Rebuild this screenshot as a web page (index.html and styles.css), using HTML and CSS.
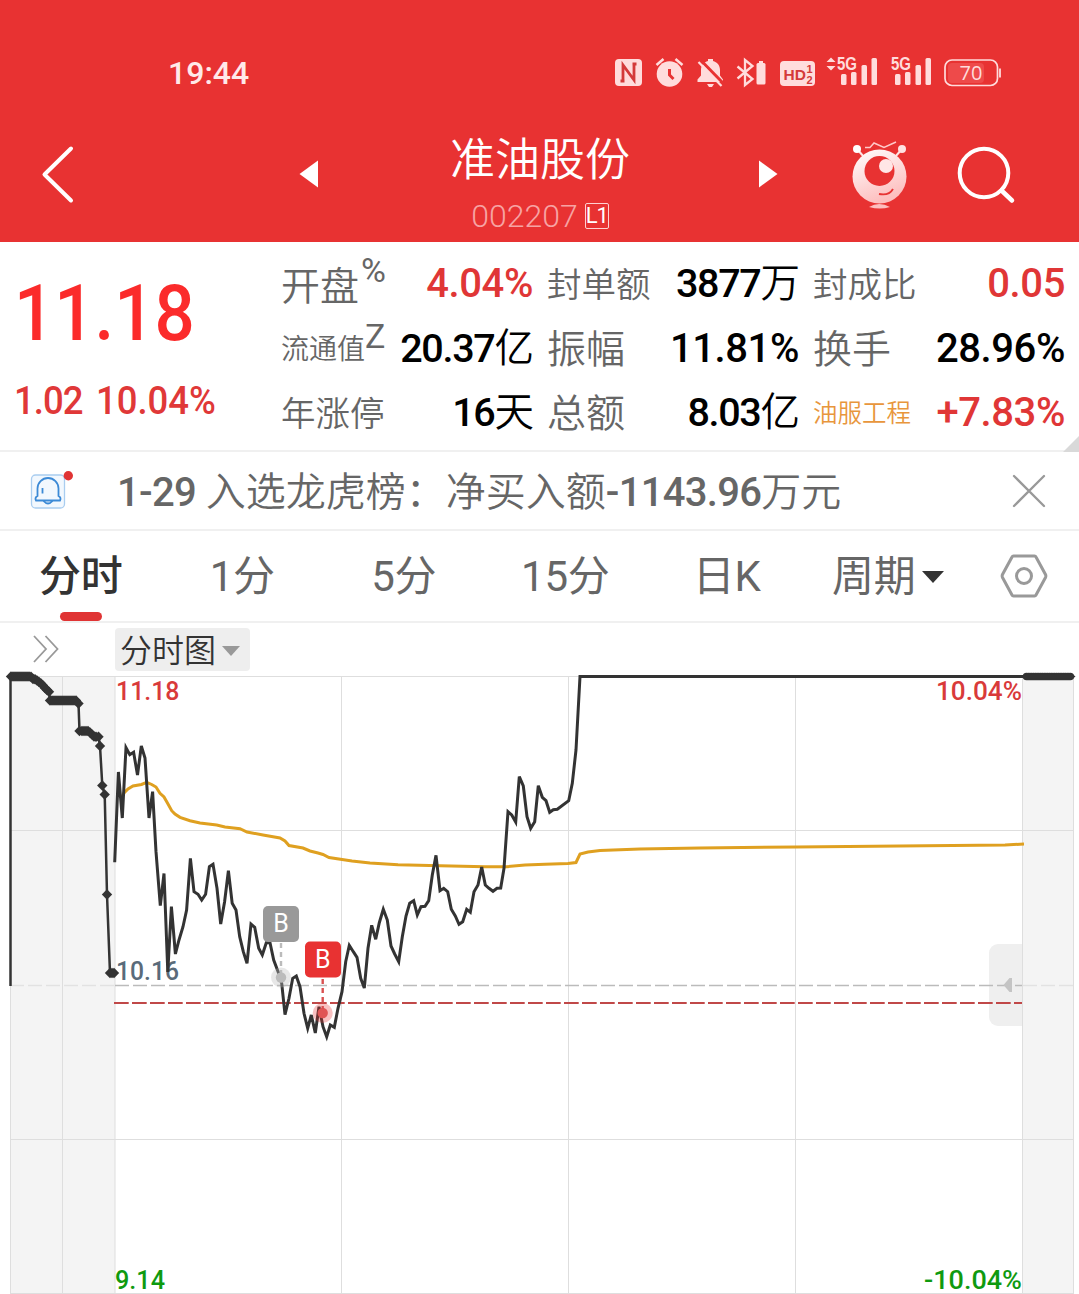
FILE: index.html
```html
<!DOCTYPE html>
<html lang="zh-CN">
<head>
  <meta charset="UTF-8" />
  <meta name="viewport" content="width=device-width, initial-scale=1" />
  <title>准油股份 002207</title>
  <link rel="stylesheet" href="styles.css">
</head>
<body>
  <header>
    <div class="status-bar">
      <span class="clock">19:44</span>
      <svg class="status-icons" width="390" height="40" viewBox="612 52 390 40">
        <!-- nfc -->
        <rect x="615" y="59" width="27" height="27" rx="4" fill="#ffdcdc"/>
        <path d="M623 81.500V65L634 80V63.500M620.500 81h4M632.500 64h4" fill="none" stroke="#d43a3a" stroke-width="2.800"/>
        <!-- alarm -->
        <circle cx="669.500" cy="74" r="12.800" fill="#ffdcdc"/>
        <path d="M656.500 65l7-6M682.500 65l-7-6" stroke="#ffdcdc" stroke-width="2.500"/>
        <path d="M669.500 69v6l4 4" fill="none" stroke="#e83232" stroke-width="3"/>
        <!-- muted bell -->
        <path d="M697.500 82v-2.500l3.500-4V70c0-5 3-8 7-9v-2h5v2c4 1 7 4 7 9v5.500l3 4V82zM707 84h7l-2 3h-3z" fill="#ffdcdc"/>
        <path d="M701 60.500l22.500 23" stroke="#e83232" stroke-width="3"/>
        <path d="M698.500 62l23 24" stroke="#ffdcdc" stroke-width="2.200"/>
        <!-- bluetooth -->
        <path d="M737.500 66.500l15 12.500-7.500 6V60l7.500 6-15 12.500" fill="none" stroke="#ffdcdc" stroke-width="2.300"/>
        <rect x="756.500" y="63" width="9" height="21.500" rx="1.500" fill="#ffdcdc"/>
        <rect x="759" y="61" width="4" height="3" fill="#ffdcdc"/>
        <!-- hd -->
        <rect x="780" y="61" width="35" height="25" rx="4" fill="#ffdcdc"/>
        <text x="783.500" y="80" class="hd-text">HD</text>
        <text x="806.500" y="72.500" class="hd-sub">1</text>
        <text x="806.500" y="83.500" class="hd-sub">2</text>
        <!-- signals -->
        <path d="M831 57.500l4.500 4.500h-9zM831 70.500l4.500-4.500h-9z" fill="#ffdcdc"/>
        <text x="837" y="70" textLength="20" lengthAdjust="spacingAndGlyphs" class="net-text">5G</text>
        <text x="891" y="70" textLength="20" lengthAdjust="spacingAndGlyphs" class="net-text">5G</text>
        <g fill="#ffdcdc">
          <rect x="841" y="74" width="5.500" height="11" rx="1.500"/>
          <rect x="851" y="72" width="5.500" height="13" rx="1.500"/>
          <rect x="861.500" y="65" width="5.500" height="20" rx="1.500"/>
          <rect x="871.500" y="58" width="5.500" height="27" rx="1.500"/>
          <rect x="895" y="74" width="5.500" height="11" rx="1.500"/>
          <rect x="905" y="72" width="5.500" height="13" rx="1.500"/>
          <rect x="915.500" y="65" width="5.500" height="20" rx="1.500"/>
          <rect x="925.500" y="58" width="5.500" height="27" rx="1.500"/>
        </g>
        <!-- battery -->
        <rect x="948" y="63" width="36" height="20" rx="4" fill="#ee4a4a"/>
        <rect x="945" y="60" width="52.500" height="25.500" rx="7" fill="none" stroke="#ffdcdc" stroke-width="1.700"/>
        <path d="M1000 68.500v9" stroke="#ffdcdc" stroke-width="1.800"/>
        <text x="971" y="79.500" text-anchor="middle" class="battery-text">70</text>
      </svg>
    </div>
    <div class="title-bar">
      <svg class="back" width="34" height="60" viewBox="0 0 34 60"><path d="M31 4.500L4.500 30.500 31 56.500" fill="none" stroke="#fff" stroke-width="4" stroke-linecap="round" stroke-linejoin="round"/></svg>
      <svg class="prev" width="20" height="28" viewBox="0 0 20 28"><path d="M0.500 14L19 0.500v27z" fill="#fff"/></svg>
      <div class="stock">
        <h1>准油股份</h1>
        <div class="code">002207<span class="level">L1</span></div>
      </div>
      <svg class="next" width="20" height="28" viewBox="0 0 20 28"><path d="M19.500 14L1 0.500v27z" fill="#fff"/></svg>
      <svg class="robot" width="56" height="70" viewBox="852 139 56 70">
        <defs>
          <linearGradient id="robotFill" x1="0" y1="0" x2="0.400" y2="1">
            <stop offset="0" stop-color="#fff"/>
            <stop offset="1" stop-color="#fdbfbf"/>
          </linearGradient>
        </defs>
        <path d="M857 149l7 8M902 149l-7 8" stroke="#ffe3e3" stroke-width="2"/>
        <circle cx="857" cy="149" r="4" fill="#fff"/>
        <circle cx="902" cy="149" r="4" fill="#ffe3e3"/>
        <path d="M865 147.500h5l4-4.500 10 4.500 12-5.500" fill="none" stroke="#ffc9c9" stroke-width="1.500"/>
        <circle cx="879.500" cy="176.500" r="27" fill="url(#robotFill)"/>
        <circle cx="879.500" cy="171" r="15" fill="#e83232"/>
        <circle cx="886" cy="166" r="7" fill="#ffe6e6"/>
        <path d="M879 194q10 2 14-5" fill="none" stroke="#e83232" stroke-width="1.800"/>
        <path d="M869 207q10-6 21 0-10 3-21 0z" fill="#fdbfbf"/>
      </svg>
      <svg class="search" width="60" height="60" viewBox="957 144 60 60"><circle cx="984" cy="173" r="24.300" fill="none" stroke="#fff" stroke-width="4"/><path d="M1001.500 190.500l10.500 10" stroke="#fff" stroke-width="4.500" stroke-linecap="round"/></svg>
    </div>
  </header>

  <section class="quote">
    <div class="price-box">
      <div class="price">11.18</div>
      <div class="change"><span>1.02</span><span>10.04%</span></div>
    </div>
    <div class="stats">
      <div class="stat"><span class="label sup-label">开盘<sup>%</sup></span><span class="value red">4.04%</span></div>
      <div class="stat"><span class="label mid">封单额</span><span class="value unit">3877<i>万</i></span></div>
      <div class="stat"><span class="label mid">封成比</span><span class="value red">0.05</span></div>
      <div class="stat"><span class="label small">流通值<sup>Z</sup></span><span class="value unit">20.37<i>亿</i></span></div>
      <div class="stat"><span class="label">振幅</span><span class="value">11.81%</span></div>
      <div class="stat"><span class="label">换手</span><span class="value">28.96%</span></div>
      <div class="stat"><span class="label mid">年涨停</span><span class="value unit">16<i>天</i></span></div>
      <div class="stat"><span class="label">总额</span><span class="value unit">8.03<i>亿</i></span></div>
      <div class="stat"><span class="label sector">油服工程</span><span class="value red">+7.83%</span></div>
    </div>
    <span class="corner"></span>
  </section>

  <section class="notice">
    <svg class="bell" width="46" height="40" viewBox="30 471 46 40">
      <rect x="31.500" y="475" width="33" height="33" rx="4" fill="#f2f8fe" stroke="#a9cdf0" stroke-width="1.300"/>
      <path d="M36 500.500q-1.500-3 1.500-4.500V488.500a10.500 10.500 0 0 1 21 0V496q3 1.500 1.500 4.500zM43.500 501q4.500 5 9 0M42.500 488v5.500" fill="none" stroke="#3c8ad6" stroke-width="1.800"/>
      <circle cx="68.300" cy="475.700" r="4.700" fill="#e03434"/>
    </svg>
    <p><b>1-29</b> 入选龙虎榜：净买入额<b>-1143.96</b>万元</p>
    <svg class="close" width="34" height="34" viewBox="0 0 34 34"><path d="M2 2l30 30M32 2L2 32" stroke="#999" stroke-width="2.300" stroke-linecap="round"/></svg>
  </section>

  <nav class="tabs">
    <span class="tab active">分时</span>
    <span class="tab">1分</span>
    <span class="tab">5分</span>
    <span class="tab">15分</span>
    <span class="tab">日K</span>
    <span class="tab">周期<b class="arrow"></b></span>
    <svg class="settings" width="48" height="44" viewBox="0 0 48 44"><path d="M13.500 2h21q1 0 1.500 1l9.500 17.500q.7 1.500 0 3L36 41q-.5 1-1.500 1h-21q-1 0-1.500-1L2.500 23.500q-.7-1.500 0-3L12 3q.5-1 1.500-1z" fill="none" stroke="#999" stroke-width="3"/><circle cx="24" cy="22" r="7.500" fill="none" stroke="#999" stroke-width="3"/></svg>
  </nav>

  <div class="toolbar">
    <svg class="expand" width="28" height="28" viewBox="0 0 28 28"><path d="M2 1l12 13L2 27M13.500 1l12 13-12 13" fill="none" stroke="#999" stroke-width="1.800"/></svg>
    <span class="chart-type">分时图<b class="arrow"></b></span>
  </div>

  <svg class="chart" width="1079" height="623" viewBox="0 671 1079 623">
    <defs>
      <marker id="dot" markerUnits="userSpaceOnUse" markerWidth="12" markerHeight="12" refX="6" refY="6">
        <path d="M0.800 6L6 0.800 11.200 6 6 11.200z" fill="#333"/>
      </marker>
    </defs>
    <!-- call auction bands -->
    <rect x="10" y="676" width="105" height="618" fill="#f4f4f4"/>
    <rect x="1022" y="676" width="52" height="618" fill="#f4f4f4"/>
    <path class="grid" d="M10 676.500H1074M10 830.500H1074M10 1139.500H1074M10 1293.500H1074M10.500 676V1294M62.500 676V1294M115 676V1294M341.500 676V1294M568.500 676V1294M795.500 676V1294M1022.500 676V1294M1073.500 676V1294"/>
    <rect x="989" y="944" width="33" height="82" fill="#efefef" rx="9"/>
    <rect x="1008" y="944" width="14" height="82" fill="#efefef"/>
    <path d="M10 985.500H115M1023 985.500H1074" stroke="#e2e2e2" stroke-width="1.500" stroke-dasharray="14 4"/>
    <path d="M115 985.500H1022" stroke="#bbb" stroke-width="1.500" stroke-dasharray="14 4"/>
    <path d="M1003.500 985l6-7h2.500v14h-2.500z" fill="#c4c4c4"/>
    <text x="116" y="979.500" textLength="63" lengthAdjust="spacingAndGlyphs" class="axis base">10.16</text>
    <path d="M114 1003H1022" stroke="#c04848" stroke-width="2" stroke-dasharray="14.700 3.300"/>

    <polyline class="average" points="122,797 124,793 128,789 133,786 141.500,784.500 146.700,782.300 151.700,784.500 156,787 160,793.300 164,797 168,804 171.700,810.700 175,814 180,817.300 190,820.700 200,823 216.700,825 225,827 240,828.700 247,832 263,835 280,838 285,841 289,845.500 303,848 310,851 318,853 323,854.500 329,857.500 352,861 370,863 398,864.700 440,865.700 485,866.700 507,866.700 525,865 545,864.300 568,863.500 576,862.500 580,854 588,852 600,850.500 640,849 700,848 796,847 900,846 1005,845 1024,844"/>
    <polyline class="price-line" points="114.700,862.300 118.400,772 122.300,818 126,747.700 129.800,754.700 133.600,752.300 137.500,775 141.300,746 145,758 149,818 152.600,791.700 156,851.700 160.300,905.700 164,873.500 167.800,972 171.400,906.700 175.400,954 179,940 183,926.700 186.600,910 190.400,858.300 194,891.700 198,894.300 201.700,900 205.600,894.300 209.400,866.700 213,864.300 217,888.300 220.700,924 224.600,901.700 228.400,870.700 232.200,903.300 236,910 239.700,936.700 243.300,951.700 247,963.300 251,924 254.700,927.300 258.700,948.300 262.300,955 266.300,942.700 270,942.700 273.700,960 279.300,975 281.700,983.300 285,1014.700 289,998.300 292.700,978.300 296.300,976 300,986.700 304,1013.300 307.700,1028.300 311.300,1015 315.300,1033 319,1006.700 323,1026.700 326.700,1036.700 330.300,1025 334.300,1027.300 338,1008.300 342,991.700 345.700,961.700 349.300,945.300 353.300,951.700 357,957.300 360.700,978.300 364.300,988 368,948.300 371.700,925.300 375.700,939.300 379.300,922.700 383.300,909.300 387.300,920 391,946 394.700,954 398.700,961.700 402.300,936.700 406,916 409.700,903.300 413.700,900.700 417.300,915 421,906.700 425,906.300 428.700,900.700 432.300,875 436,855.300 440,890.700 443.700,888.300 447.700,891.700 451.300,909.300 455.300,916 459,924.300 462.700,921.700 466.700,909.300 470.300,912.300 474,891.700 478,885 481.700,867 485.300,885 489,888.300 493,891.300 497,888.300 500.700,888 504,868.300 508,811.700 511.700,815 515.700,822 519.300,776.700 523.300,786 527,816.700 530.700,828.300 534.700,821.700 538.300,785.700 542.300,797.300 546,800.700 549.700,812.300 553.300,809.700 557.300,809.300 568.700,800.700 572.300,783.300 576,750 580,676.500 1024,676.500"/>

    <!-- call auction -->
    <path d="M10.500 676V986" stroke="#333" stroke-width="2.500"/>
    <polyline class="auction" points="11,676.500 13,676.500 15,676.500 17,676.500 19,676.500 21,676.500 23,676.500 25,676.500 27,676.500 29,676.500 31,676.700 33,679 35,679.300 37,680.500 39,682 41,683.500 43,685.500 45,688 47,690 49,691.700 50,700.500 52,700.500 54,700.500 56,700.500 58,700.500 60,700.500 62,700.500 64,700.500 66,700.500 68,700.500 70,700.500 72,700.500 74,700.500 76,700.500 78.500,703.500 79.500,731 82,731 84,731 86,731 88,731 90,732.500 92,734.500 94,736.500 96,736.800 98.500,736.800 100,746 102.300,785.500 104.700,794.500 107,894.500 110,973 112,973 114,973"/>
    <path d="M1026.500 676.500H1071.500" stroke="#333" stroke-width="7.500" stroke-linecap="round" stroke-dasharray="0.100 2.200"/>
    <path d="M1024 674.500H1073L1075.500 676.500 1073 678.500H1024z" fill="#333"/>

    <!-- buy marks -->
    <g>
      <circle cx="281" cy="977.500" r="10" fill="#bbb" opacity=".35"/>
      <circle cx="281" cy="977.500" r="5.200" fill="#bbb"/>
      <path d="M281 943v30" stroke="#bbb" stroke-width="2.400" stroke-dasharray="5 4"/>
      <rect x="263" y="906" width="36" height="36" rx="5" fill="#999"/>
      <text x="281" y="932" text-anchor="middle" class="mark">B</text>
      <circle cx="322.700" cy="1013" r="10" fill="#e83232" opacity=".3"/>
      <circle cx="322.700" cy="1013" r="5.200" fill="#e05555"/>
      <path d="M322.700 979v30" stroke="#d95050" stroke-width="2.400" stroke-dasharray="5 4"/>
      <rect x="305" y="941.500" width="36" height="36" rx="5" fill="#e83232"/>
      <text x="322.700" y="967.500" text-anchor="middle" class="mark">B</text>
    </g>

    <text x="116" y="700" textLength="63.500" lengthAdjust="spacingAndGlyphs" class="axis up">11.18</text>
    <text x="936" y="700" textLength="86" lengthAdjust="spacingAndGlyphs" class="axis up">10.04%</text>
    <text x="115" y="1289" textLength="50" lengthAdjust="spacingAndGlyphs" class="axis down">9.14</text>
    <text x="924" y="1289" textLength="98" lengthAdjust="spacingAndGlyphs" class="axis down">-10.04%</text>
  </svg>
</body>
</html>
```

FILE: styles.css
```css
* {
  box-sizing: border-box;
}
body {
  margin: 0;
  width: 1079px;
  height: 1294px;
  overflow: hidden;
  background: #fff;
  color: #000;
  font-family: Roboto, "Noto Sans CJK SC", sans-serif;
}
svg {
  display: block;
  flex-shrink: 0;
}
header {
  height: 242px;
  background: #e83232;
  color: #fff;
}
.status-bar {
  display: flex;
  justify-content: space-between;
  align-items: center;
  height: 92px;
  padding: 52px 77px 0 168px;
}
.clock {
  padding-top: 2px;
  font-size: 32px;
  line-height: 40px;
  font-weight: 500;
  color: #ffe9e9;
}
.hd-text, .hd-sub, .net-text {
  font-family: "Liberation Sans", sans-serif;
  font-weight: bold;
}
.hd-text {
  font-size: 15.500px;
  fill: #d43a3a;
}
.hd-sub {
  font-size: 11px;
  fill: #d43a3a;
}
.net-text {
  font-size: 18px;
  fill: #ffdcdc;
}
.battery-text {
  font-family: "Open Sans", sans-serif;
  font-size: 20px;
  fill: #ffdcdc;
}
.title-bar {
  display: flex;
  align-items: center;
  height: 150px;
  padding: 14px 60px 0 40px;
}
.prev {
  margin-left: 225px;
}
.stock {
  width: 439px;
  padding: 15px 0 0 3px;
  text-align: center;
}
.stock h1 {
  margin: 0;
  font-size: 45px;
  line-height: 62px;
  font-weight: 350;
}
.code {
  display: flex;
  justify-content: center;
  align-items: center;
  gap: 7px;
  height: 36px;
  margin-top: 6px;
  font-size: 32px;
  font-weight: 300;
  color: #f7a3a3;
}
.level {
  width: 24px;
  height: 26px;
  border: 1px solid #ffd0d0;
  border-radius: 2px;
  font-size: 22px;
  line-height: 24px;
  font-weight: 400;
  letter-spacing: -1px;
  color: #fff;
}
.robot {
  margin-left: 74px;
}
.search {
  margin-left: 49px;
}
.quote {
  position: relative;
  display: flex;
  height: 210px;
  border-bottom: 2px solid #f0f0f0;
}
.price-box {
  width: 281px;
  padding: 25px 0 0 14px;
  color: #fb2b2b;
}
.price {
  font-size: 77px;
  line-height: 94px;
  font-weight: 500;
  transform: scaleX(0.92);
  transform-origin: 0 0;
}
.change {
  display: flex;
  gap: 14px;
  margin-top: 16px;
  font-size: 38px;
  line-height: 48px;
  font-weight: 500;
  color: #e03838;
  transform: scaleX(0.96);
  transform-origin: 0 0;
}
.change span:first-child {
  letter-spacing: -1px;
}
.stats {
  display: grid;
  grid-template-columns: repeat(3, 252px);
  grid-template-rows: repeat(3, 64.500px);
  column-gap: 14px;
  padding-top: 10px;
}
.stat {
  display: flex;
  justify-content: space-between;
  align-items: center;
  white-space: nowrap;
}
.label {
  display: flex;
  align-items: center;
  padding-top: 2px;
  font-size: 39px;
  line-height: 52px;
  font-weight: 350;
  color: #666;
}
.label.sup-label {
  padding-top: 6px;
}
.label.mid {
  font-size: 34.500px;
}
.label.small {
  font-size: 28px;
}
.label.sector {
  font-size: 24.500px;
  color: #e8963c;
}
.label sup {
  margin-top: -27px;
  font-size: 34px;
  line-height: 30px;
  font-weight: 400;
}
.sup-label sup {
  margin: -34px 0 0 2px;
}
.value {
  font-size: 40px;
  line-height: 52px;
  font-weight: 500;
  letter-spacing: -0.400px;
}
.value.unit {
  font-size: 39.500px;
  letter-spacing: -1.300px;
}
.value i {
  margin-right: -1px;
  font-style: normal;
  font-weight: 350;
  letter-spacing: 0;
}
.value.red {
  color: #e03636;
}
.corner {
  position: absolute;
  right: 0;
  bottom: -2px;
  border-style: solid;
  border-width: 0 0 16px 16px;
  border-color: transparent transparent #d9d9d9 transparent;
}
.notice {
  display: flex;
  align-items: center;
  height: 79px;
  padding: 0 33px 0 30px;
  border-bottom: 2px solid #f0f0f0;
}
.notice p {
  flex: 1;
  margin: -4px 0 0 41px;
  font-size: 40px;
  font-weight: 350;
  color: #666;
  white-space: nowrap;
}
.notice b {
  font-weight: 500;
  letter-spacing: -0.700px;
}
.tabs {
  display: grid;
  grid-template-columns: repeat(6, 161.500px) 110px;
  align-items: center;
  justify-items: center;
  height: 92px;
  border-bottom: 2px solid #f0f0f0;
}
.tab {
  position: relative;
  display: flex;
  align-items: center;
  padding-top: 2px;
  font-size: 42px;
  line-height: 60px;
  font-weight: 400;
  letter-spacing: -0.300px;
  color: #666;
}
.tab.active {
  font-weight: 500;
  color: #333;
}
.tab.active::after {
  content: "";
  position: absolute;
  left: 50%;
  bottom: -14px;
  width: 42px;
  height: 9px;
  margin-left: -21px;
  border-radius: 5px;
  background: #e03434;
}
.arrow {
  width: 0;
  height: 0;
  margin-left: 7px;
  border: 11px solid transparent;
  border-top: 12px solid #333;
  border-bottom: 0;
}
.toolbar {
  display: flex;
  align-items: center;
  height: 48px;
  padding-left: 32px;
}
.chart-type {
  display: flex;
  align-items: center;
  width: 135px;
  height: 43px;
  margin: 5px 0 0 55px;
  padding: 0 0 3px 5px;
  border-radius: 4px;
  background: #eee;
  color: #333;
  font-size: 32px;
  font-weight: 350;
}
.expand {
  margin-top: 4px;
}
.chart-type .arrow {
  margin: 6px 0 0 6px;
  border-width: 10px 9px 0;
  border-top-color: #999;
}
.grid {
  fill: none;
  stroke: #dedede;
  stroke-width: 1;
}
.average, .price-line, .auction {
  fill: none;
  stroke-width: 3;
}
.average {
  stroke: #dfa020;
}
.price-line {
  stroke: #333;
}
.auction {
  stroke: #333;
  stroke-width: 2.500;
  marker-start: url(#dot);
  marker-mid: url(#dot);
  marker-end: url(#dot);
}
.axis {
  font-size: 26px;
  font-weight: 500;
}
.up {
  fill: #d93a3a;
}
.down {
  fill: #0f9a0f;
}
.base {
  fill: #5a6b7a;
}
.mark {
  font-size: 25px;
  fill: #fff;
}
```
